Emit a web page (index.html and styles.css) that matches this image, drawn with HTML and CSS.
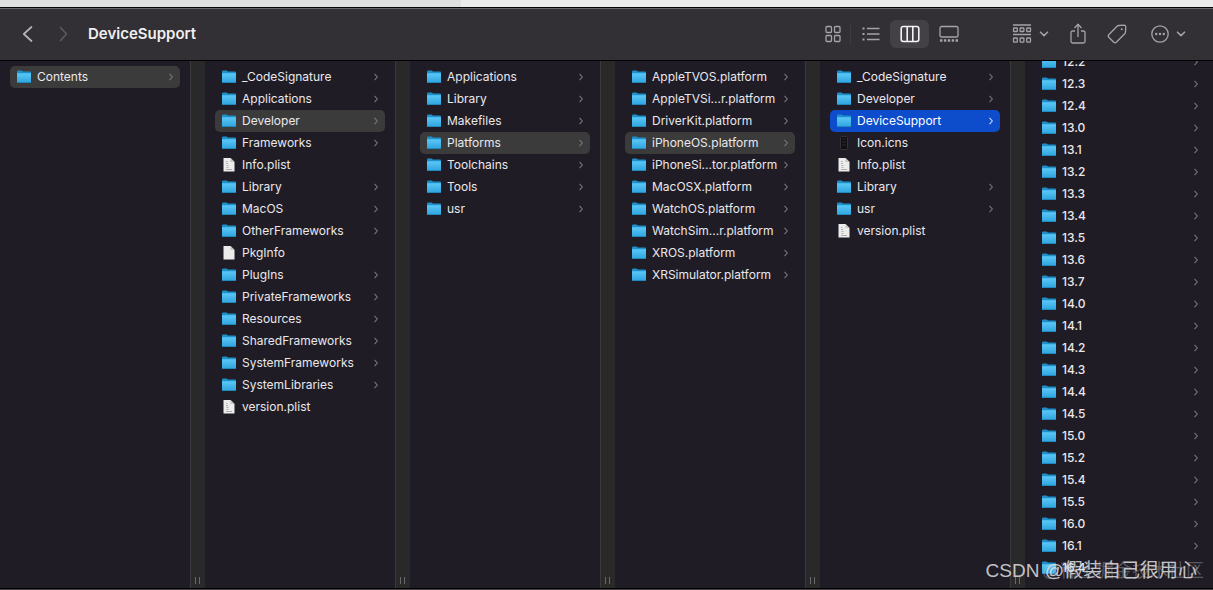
FILE: index.html
```
<!DOCTYPE html>
<html lang="en">
<head>
<meta charset="utf-8">
<title>DeviceSupport</title>
<link rel="stylesheet" href="styles.css">
</head>
<body>
<svg class="defs" aria-hidden="true">
  <defs>
    <linearGradient id="front" x1="0" y1="0" x2="0" y2="1"><stop offset="0" stop-color="#5cc8f7"/><stop offset="1" stop-color="#2da3de"/></linearGradient>
    <symbol id="folder" viewBox="0 0 14 14"><path d="M0 1.4Q0 .4 1.2 .4H4.6L6 1.6H13Q14 1.6 14 2.6V12.5H0Z" fill="#1f8fca"/><path d="M0 3.2H14V12.4Q14 13 13.4 13H.6Q0 13 0 12.4Z" fill="url(#front)"/><path d="M0 12.5H14" stroke="#2189bd"/></symbol>
    <symbol id="doc" viewBox="0 0 14 14"><path d="M1.5 0H8.5L12.5 4V13.5H1.5Z" fill="#ececec"/><path d="M8.5 0V4H12.5Z" fill="#c6c6c6"/></symbol>
    <symbol id="plist" viewBox="0 0 14 14"><path d="M1.5 0H8.5L12.5 4V13.5H1.5Z" fill="#ececec"/><path d="M8.5 0V4H12.5Z" fill="#c6c6c6"/><path d="M4 3.5H5.5M4 5.5H6M4.5 7.5H6.5M4.5 9.5H6.5M4 11.5H10" stroke="#b0b0b0"/></symbol>
    <symbol id="phone" viewBox="0 0 14 14"><rect x="3.5" y=".5" width="7" height="13" rx="1" fill="#101012" stroke="#343437"/><path d="M5 3H9M5 6H9M5 9H9" stroke="#29292c"/></symbol>
    <symbol id="arrow" viewBox="0 0 6 10"><path d="M1.5 1.8L4.3 5L1.5 8.2" fill="none" stroke="currentColor" stroke-width="1.1"/></symbol>
    <symbol id="down" viewBox="0 0 10 6"><path d="M1.5 1.2L5 4.6L8.5 1.2" fill="none" stroke="currentColor" stroke-width="1.6" stroke-linecap="round" stroke-linejoin="round"/></symbol>
  </defs>
</svg>
<div class="backdrop"><div class="backdrop-tab"></div></div>
<div class="window">
  <header class="toolbar">
    <button class="nav" aria-label="Back"><svg width="12" height="18" viewBox="0 0 12 18"><path d="M9.5 2L1.8 9L9.5 16"/></svg></button>
    <button class="nav nav-off" aria-label="Forward" disabled><svg width="12" height="18" viewBox="0 0 12 18"><path d="M2.5 2.5L8.5 9L2.5 15.5"/></svg></button>
    <h1 class="title">DeviceSupport</h1>
    <div class="views">
      <button class="tool view-icons" aria-label="Icons"><svg width="16" height="18" viewBox="0 0 16 18"><rect x="1" y="1.5" width="5.5" height="6" rx="1"/><rect x="9.5" y="1.5" width="5.5" height="6" rx="1"/><rect x="1" y="10.5" width="5.5" height="6" rx="1"/><rect x="9.5" y="10.5" width="5.5" height="6" rx="1"/></svg></button>
      <span class="separator"></span>
      <button class="tool" aria-label="List"><svg width="18" height="16" viewBox="0 0 18 16"><path d="M5 2.5H17.5M5 8H17.5M5 13.5H17.5"/><path d="M.5 2.5H2.5M.5 8H2.5M.5 13.5H2.5" stroke-width="2"/></svg></button>
      <button class="tool active" aria-label="Columns"><svg width="20" height="18" viewBox="0 0 20 18"><rect x="1.2" y="1.5" width="17.6" height="15" rx="2.2"/><path d="M7.2 1.5V16.5M12.8 1.5V16.5"/></svg></button>
      <button class="tool" aria-label="Gallery"><svg width="20" height="18" viewBox="0 0 20 18"><rect x="1" y="1.5" width="18" height="10.5" rx="1.6"/><path d="M1 15.5H19" stroke-width="2.6" stroke-dasharray="2.4 1.5"/></svg></button>
    </div>
    <div class="actions">
      <button class="tool group" aria-label="Group"><svg width="20" height="20" viewBox="0 0 20 20"><path d="M1 1H19M1 10.5H19"/><rect x="1.5" y="4" width="3.8" height="3.5" rx=".6"/><rect x="8.1" y="4" width="3.8" height="3.5" rx=".6"/><rect x="14.7" y="4" width="3.8" height="3.5" rx=".6"/><rect x="1.5" y="14" width="3.8" height="4.2" rx=".6"/><rect x="8.1" y="14" width="3.8" height="4.2" rx=".6"/><rect x="14.7" y="14" width="3.8" height="4.2" rx=".6"/></svg><svg width="10" height="6"><use href="#down"/></svg></button>
      <button class="tool" aria-label="Share"><svg width="16" height="22" viewBox="0 0 16 22"><path d="M5 8H2.5Q1 8 1 9.5V18.5Q1 20 2.5 20H13.5Q15 20 15 18.5V9.5Q15 8 13.5 8H11M8 14V1.5M4.5 5L8 1.3L11.5 5"/></svg></button>
      <button class="tool" aria-label="Tags"><svg width="20" height="20" viewBox="0 0 20 20"><path d="M11.8 1.5L17 1.2Q18.8 1.2 18.8 3L18.5 8Q18.4 9 17.7 9.7L9.3 18.2Q8 19.4 6.8 18.2L1.8 13.2Q.6 12 1.8 10.7L10 2.3Q10.8 1.6 11.8 1.5Z"/><circle cx="14.7" cy="5.2" r="1" fill="currentColor" stroke="none"/></svg></button>
      <button class="tool group" aria-label="More"><svg width="18" height="18" viewBox="0 0 18 18"><circle cx="9" cy="9" r="8.2"/><g fill="currentColor" stroke="none"><circle cx="5.2" cy="9" r="1.2"/><circle cx="9" cy="9" r="1.2"/><circle cx="12.8" cy="9" r="1.2"/></g></svg><svg width="10" height="6"><use href="#down"/></svg></button>
    </div>
  </header>
  <main class="browser" id="browser"></main>
</div>
<div class="mark mark-faint" lang="zh">@稀土掘金技术社区</div>
<div class="mark" lang="zh">CSDN @假装自己很用心</div>
<script src="columns.js"></script>
</body>
</html>
```
FILE: columns.js
```
const columns = [
  { selected: "Contents", items: "Contents" },
  { selected: "Developer", items: "_CodeSignature,Applications,Developer,Frameworks,Info.plist,Library,MacOS,OtherFrameworks,PkgInfo,PlugIns,PrivateFrameworks,Resources,SharedFrameworks,SystemFrameworks,SystemLibraries,version.plist" },
  { selected: "Platforms", items: "Applications,Library,Makefiles,Platforms,Toolchains,Tools,usr" },
  { selected: "iPhoneOS.platform", items: "AppleTVOS.platform,AppleTVSi...r.platform,DriverKit.platform,iPhoneOS.platform,iPhoneSi...tor.platform,MacOSX.platform,WatchOS.platform,WatchSim...r.platform,XROS.platform,XRSimulator.platform" },
  { selected: "DeviceSupport", current: true, items: "_CodeSignature,Developer,DeviceSupport,Icon.icns,Info.plist,Library,usr,version.plist" },
  { scrolled: true, items: "12.2,12.3,12.4,13.0,13.1,13.2,13.3,13.4,13.5,13.6,13.7,14.0,14.1,14.2,14.3,14.4,14.5,15.0,15.2,15.4,15.5,16.0,16.1,16.4" }
];

function iconFor(name) {
  if (name.endsWith(".plist")) return "plist";
  if (name === "PkgInfo") return "doc";
  if (name === "Icon.icns") return "phone";
  return "folder";
}

function row(name, column) {
  const icon = iconFor(name);
  const state = name !== column.selected ? "" : column.current ? " current" : " selected";
  const arrow = icon === "folder" ? '<svg class="arrow"><use href="#arrow"/></svg>' : "";
  return `<li><button class="row${state}"><svg class="icon"><use href="#${icon}"/></svg><span class="name">${name}</span>${arrow}</button></li>`;
}

document.getElementById("browser").innerHTML = columns.map(column => {
  const rows = column.items.split(",").map(name => row(name, column)).join("");
  const divider = column.scrolled ? "" : '<div class="divider"><span class="grip"></span></div>';
  return `<section class="column${column.scrolled ? " scrolled" : ""}"><ul class="list">${rows}</ul>${divider}</section>`;
}).join("");
```
FILE: styles.css
```
* { box-sizing: border-box; }
body {
  margin: 0;
  height: 100vh;
  display: flex;
  flex-direction: column;
  overflow: hidden;
  background: #4a3f44;
  font-family: Inter, "Noto Sans CJK SC", sans-serif;
  color: #eae8ec;
}
button {
  border: 0;
  padding: 0;
  background: none;
  font: inherit;
  color: inherit;
}
.defs { position: absolute; width: 0; height: 0; }
.backdrop { flex: 0 0 7px; background: #ebebeb; }
.backdrop-tab { width: 38%; height: 100%; background: #dfdfdf; }
.window {
  flex: 1;
  min-height: 0;
  margin-bottom: 1px;
  display: flex;
  flex-direction: column;
  border-top: 1px solid #050506;
  border-bottom: 1px solid #000;
  background: #1f1c25;
}
.toolbar {
  flex: 0 0 53px;
  display: flex;
  align-items: center;
  padding: 0 25px 2px 22px;
  border-top: 1px solid #68676a;
  border-bottom: 1px solid #000;
  background: #323034;
  color: #a5a3a7;
}
.toolbar svg {
  display: block;
  fill: none;
  stroke: currentColor;
  stroke-width: 1.3;
  stroke-linejoin: round;
}
.nav { margin-right: 24px; color: #b5b3b7; }
.nav svg { stroke-width: 1.7; stroke-linecap: round; }
.nav-off { margin-right: 18px; color: #5c5a5e; }
.title {
  flex: 1;
  margin: 0;
  font-size: 15px;
  line-height: 20px;
  font-weight: 600;
  color: #f0eff1;
}
.views { display: flex; align-items: center; }
.tool {
  height: 28px;
  min-width: 39px;
  display: flex;
  align-items: center;
  justify-content: center;
}
.view-icons { min-width: 35px; }
.separator { width: 1px; height: 20px; background: #3e3c40; }
.active { background: #434145; border-radius: 6px; color: #f4f3f5; }
.active svg { stroke-width: 1.6; }
.group { gap: 7px; }
.actions { display: flex; align-items: center; margin-left: 43px; }
.actions .group:first-child { margin-right: 8px; }
.actions .group:last-child { margin-left: 13px; }

.browser { flex: 1; min-height: 0; display: flex; overflow: hidden; }
.column { flex: 0 0 205px; display: flex; min-height: 0; overflow: hidden; }
.column:last-child { flex: 1 0 188px; }
.list {
  flex: 1;
  min-width: 0;
  margin: 0;
  padding: 5px 10px;
  list-style: none;
}
.row {
  width: 100%;
  height: 22px;
  display: flex;
  align-items: center;
  padding: 0 6px 0 7px;
  border-radius: 5px;
  text-align: left;
  font-size: 12px;
  line-height: 22px;
  font-weight: 400;
  white-space: nowrap;
}
.scrolled .list { margin-top: -15px; padding-right: 8px; }
.scrolled .row { font-weight: 500; }
.icon { flex: none; width: 14px; height: 14px; margin-right: 6px; }
.name { flex: 1; }
.arrow { flex: none; width: 6px; height: 10px; color: #77757b; }
.selected { background: #3c3b3b; }
.current { background: #0d4ccb; color: #fff; }
.current .arrow { color: #c5d5fa; }
.divider {
  width: 15px;
  display: flex;
  align-items: flex-end;
  justify-content: center;
  padding: 0 2px 4px 0;
  background: #292929;
  border-left: 1px solid #3a393c;
}
.grip { width: 5px; height: 7px; border: solid #68676a; border-width: 0 1px; }

/* Watermarks overlay the window's lower right corner. */
.mark {
  position: absolute;
  right: 16px;
  bottom: 6px;
  font-family: "Liberation Sans", "Noto Sans CJK SC", sans-serif;
  font-size: 19px;
  line-height: 26px;
  white-space: nowrap;
  color: rgba(225, 225, 228, .85);
}
.mark-faint { right: 9px; font-size: 18px; color: rgba(200, 200, 204, .35); }
```
